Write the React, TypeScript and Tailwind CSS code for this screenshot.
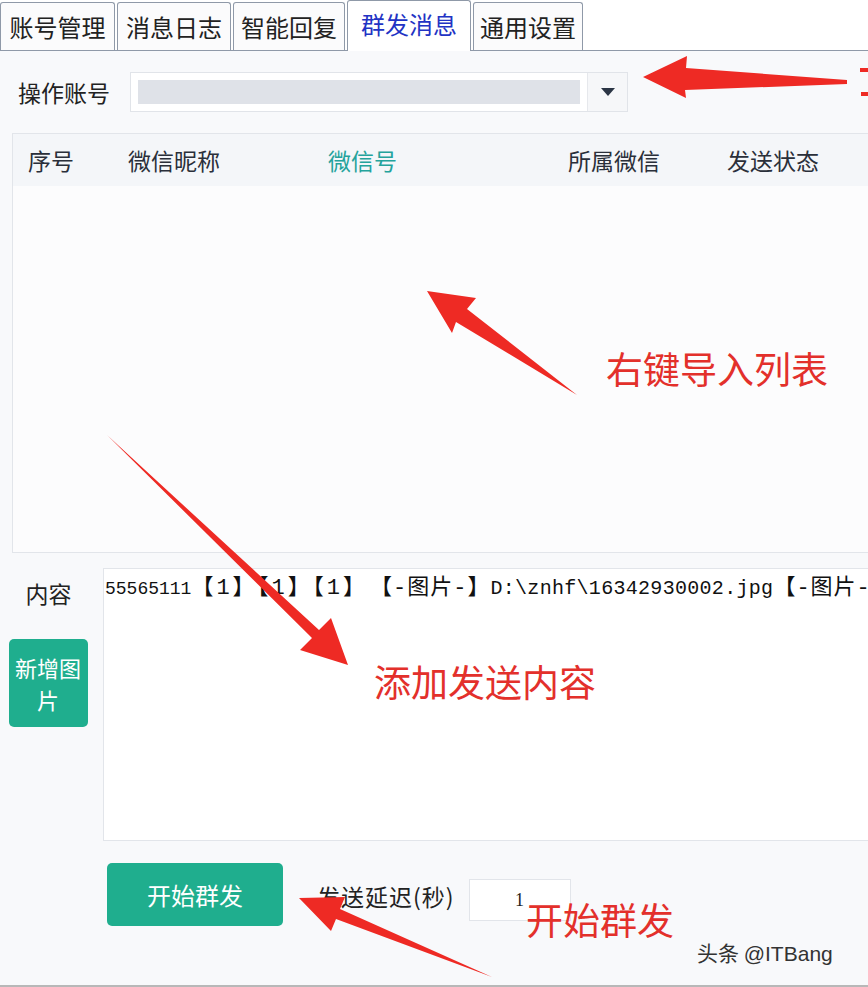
import React from 'react';

const cjk = '"Noto Sans CJK SC", "Noto Sans", sans-serif';
const mono = '"Liberation Mono", "Noto Sans CJK SC", monospace';

const tabs = [
  { label: '账号管理', w: 'w-[115px]' },
  { label: '消息日志', w: 'w-[114px]' },
  { label: '智能回复', w: 'w-[112px]' },
  { label: '群发消息', w: 'w-[124px]', active: true },
  { label: '通用设置', w: 'w-[110px]' },
];

const columns = [
  { label: '序号', w: 'w-[100px]' },
  { label: '微信昵称', w: 'w-[200px]' },
  { label: '微信号', w: 'w-[240px]', accent: true },
  { label: '所属微信', w: 'w-[159px]' },
  { label: '发送状态', w: 'w-[140px]' },
];

// 红色标注箭头
const Arrows: React.FC = () => (
  <svg className="absolute inset-0 pointer-events-none" width="868" height="987" viewBox="0 0 868 987">
    <g fill="#ee2a24">
      <polygon points="643,77 687,56 686,68 847,80 847,84 685,90 686,98" />
      <polygon points="427,291 476,298 467,309 577,395 456,322 452,333" />
      <polygon points="107,435 319,630 331,618 348,665 300,650 312,638" />
      <polygon points="299,898 345,897 340,909 492,977 336,919 331,931" />
      <rect x="860" y="68" width="8" height="4" />
      <rect x="861" y="92" width="7" height="4" />
    </g>
  </svg>
);

const App: React.FC = () => {
  return (
    <div
      className="relative w-[868px] h-[987px] overflow-hidden bg-[#f8f9fb] text-[#222]"
      style={{ fontFamily: cjk }}
    >
      {/* 标签栏 */}
      <div className="flex items-end gap-[2px] h-[51px] border-b border-[#8f99a8] bg-white">
        {tabs.map((t) => (
          <div
            key={t.label}
            className={`${t.w} flex items-center justify-center border border-b-0 border-[#8f99a8] rounded-t-[3px] text-[24px] leading-none ${
              t.active ? 'h-[51px] -mb-px bg-white text-[#2233c4] pb-[4px]' : 'h-[48px] bg-[#fbfbfc]'
            }`}
          >
            {t.label}
          </div>
        ))}
      </div>

      {/* 操作账号 */}
      <div className="flex items-center h-[82px] pl-[18px]">
        <span className="text-[23px] w-[112px]">操作账号</span>
        <div className="flex items-stretch w-[498px] h-[40px] border border-[#e1e4e9] bg-white">
          <div className="flex-1 p-[7px]">
            <div className="h-full bg-[#dfe2e8]" />
          </div>
          <div className="w-[40px] flex items-center justify-center border-l border-[#e6e8ec] bg-[#f6f7f9]">
            <svg width="14" height="8" viewBox="0 0 14 8">
              <polygon points="0,0 14,0 7,8" fill="#2b3545" />
            </svg>
          </div>
        </div>
      </div>

      {/* 列表 */}
      <div className="ml-[12px] h-[420px] border border-r-0 border-[#e2e5ea] bg-[#fcfcfd] flex flex-col">
        <div className="flex items-center h-[52px] bg-[#f4f6f9] pl-[15px] text-[23px]">
          {columns.map((c) => (
            <span key={c.label} className={`${c.w} ${c.accent ? 'text-[#24a39c]' : 'text-[#2a2f3a]'}`}>
              {c.label}
            </span>
          ))}
        </div>
        <div className="flex-1" />
      </div>

      {/* 内容 */}
      <div className="flex mt-[15px] h-[273px]">
        <div className="w-[103px] flex flex-col items-center">
          <span className="text-[23px] mt-[8px] mr-[6px]">内容</span>
          <div className="mt-[28px] ml-[-7px] w-[79px] h-[88px] rounded-[5px] bg-[#1fae8e] text-white text-[22px] flex flex-col items-center justify-center text-center">
            <span className="block leading-[32px]">新增图</span>
            <span className="block leading-[32px]">片</span>
          </div>
        </div>
        <div className="flex-1 border border-r-0 border-[#e2e5ea] bg-white pt-[3px] pl-[1px] overflow-hidden">
          <div className="flex items-baseline whitespace-nowrap text-[#111]" style={{ fontFamily: mono }}>
            <span className="text-[18px]">55565111</span>
            <span className="text-[22px] tracking-[3px]">【1】【1】【1】</span>
            <span className="ml-[2px] text-[22px] tracking-[1px]">【-图片-】</span>
            <span className="text-[20px] tracking-[0.3px]">D:\znhf\16342930002.jpg</span>
            <span className="text-[22px] tracking-[1px]">【-图片-】</span>
          </div>
        </div>
      </div>

      {/* 底部操作 */}
      <div className="flex items-start pt-[22px] pl-[107px]">
        <div className="w-[176px] h-[63px] rounded-[5px] bg-[#1fae8e] text-white text-[24px] flex items-center justify-center">
          开始群发
        </div>
        <span className="ml-[34px] mt-[16px] text-[23px] tracking-[1px]">发送延迟(秒)</span>
        <div
          className="ml-[14px] mt-[16px] w-[102px] h-[42px] border border-[#e2e5ea] bg-white flex items-center justify-center text-[18px]"
          style={{ fontFamily: '"Liberation Serif", serif' }}
        >
          1
        </div>
      </div>
      <div className="absolute left-0 right-0 bottom-0 h-[2px] bg-[#b8b8b8]" />

      {/* 标注 */}
      <Arrows />
      <div className="absolute left-[606px] top-[350px] text-[37px] leading-none text-[#e3302b]">右键导入列表</div>
      <div className="absolute left-[374px] top-[663px] text-[37px] leading-none text-[#e3302b]">添加发送内容</div>
      <div className="absolute left-[526px] top-[901px] text-[37px] leading-none text-[#e3302b]">开始群发</div>
      <div className="absolute left-[697px] top-[942px] text-[21px] leading-none text-[#333]">
        头条 <span style={{ fontFamily: '"Liberation Sans", sans-serif' }}>@ITBang</span>
      </div>
    </div>
  );
};

export default App;
